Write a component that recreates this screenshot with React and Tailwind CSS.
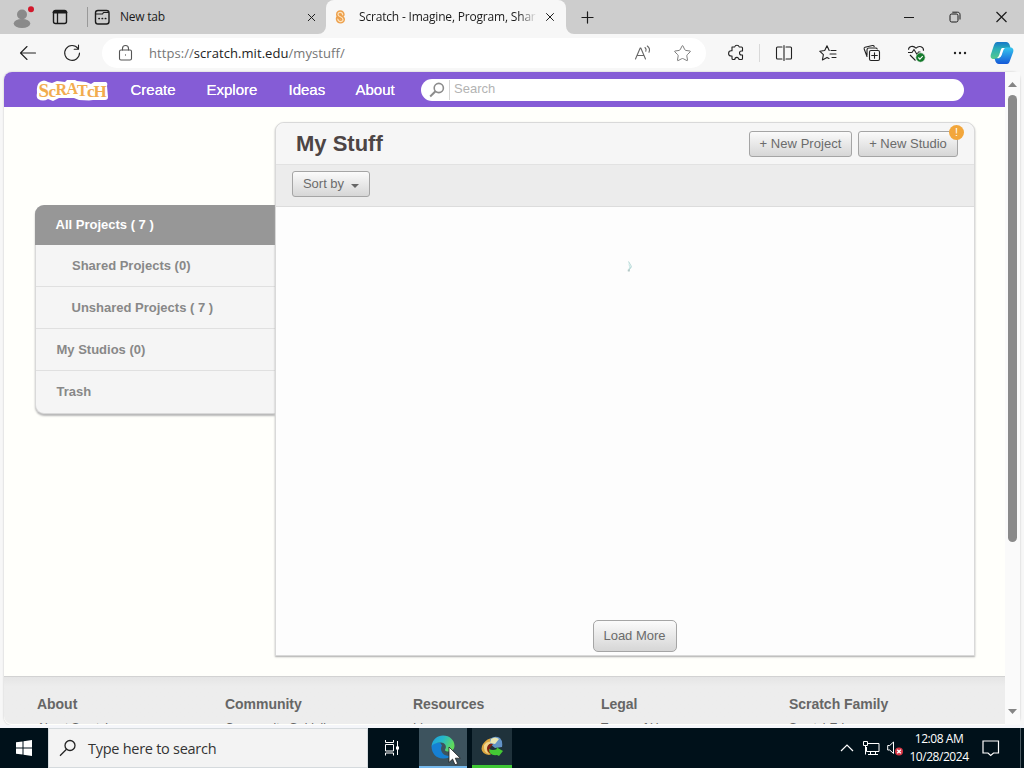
import React from 'react';
import { X, Plus, Star } from 'lucide-react';

const navLinks = [
  { label: 'Create', width: 'w-[76px]' },
  { label: 'Explore', width: 'w-[82px]' },
  { label: 'Ideas', width: 'w-[67px]' },
  { label: 'About', width: 'w-[65px]' },
];

const folders = [
  { label: 'Shared Projects (0)', className: 'h-[42px] pl-[36px]' },
  { label: 'Unshared Projects ( 7 )', className: 'h-[42px] pl-[35.5px]' },
  { label: 'My Studios (0)', className: 'h-[42px] pl-[20.5px]' },
  { label: 'Trash', className: 'h-[41px] pl-[20.5px]' },
];

const footerColumns = [
  { title: 'About', link: 'About Scratch' },
  { title: 'Community', link: 'Community Guidelines' },
  { title: 'Resources', link: 'Ideas' },
  { title: 'Legal', link: 'Terms of Use' },
  { title: 'Scratch Family', link: 'ScratchEd' },
];

function Icon({ size = 18, className = '', children }) {
  return (
    <svg
      width={size}
      height={size}
      viewBox="0 0 18 18"
      fill="none"
      stroke="currentColor"
      strokeWidth="1.1"
      strokeLinecap="round"
      strokeLinejoin="round"
      className={`shrink-0 ${className}`}
    >
      {children}
    </svg>
  );
}

function TabStrip() {
  return (
    <div className="flex h-[34px] items-center bg-[#cdcdcd] text-[#1b1b1b]">
      <svg width="24" height="24" viewBox="0 0 24 24" className="ml-[11px] shrink-0">
        <circle cx="11" cy="9.5" r="5" fill="#8a8a8a" />
        <ellipse cx="11" cy="18.5" rx="8.3" ry="4.6" fill="#8a8a8a" />
        <circle cx="20" cy="4.2" r="3" fill="#d2182b" />
      </svg>
      <Icon className="ml-[16px]" size={18}>
        <rect x="2.5" y="2.5" width="13" height="13" rx="2" strokeWidth="1.4" />
        <path d="M3 4.3h12" strokeWidth="2.6" />
        <path d="M6.5 5v10" strokeWidth="1.3" />
      </Icon>
      <div className="ml-[18px] h-[20px] w-px bg-[#999]" />
      <Icon className="ml-[5px]" size={18}>
        <rect x="2.5" y="2.5" width="13.5" height="13.5" rx="2.5" strokeWidth="1.4" />
        <path d="M3 6h6.5l1-1.5h5" strokeWidth="1.2" />
        <path d="M6 10.500h.3M9.200 10.500h.3M12.400 10.500h.3" strokeWidth="1.7" />
      </Icon>
      <span className="ml-[9px] w-[185px] text-[12px] tracking-[-0.25px]">New tab</span>
      <X size={13} strokeWidth={1.8} />
      <div className="relative ml-[8px] flex h-full w-[240px] items-center rounded-t-[8px] bg-[#f7f7f7]">
        <svg width="8" height="8" className="absolute bottom-0 -left-[8px]">
          <path d="M8 0v8H0a8 8 0 0 0 8-8z" fill="#f7f7f7" />
        </svg>
        <svg width="8" height="8" className="absolute -right-[8px] bottom-0">
          <path d="M0 0v8h8a8 8 0 0 1-8-8z" fill="#f7f7f7" />
        </svg>
        <svg width="11" height="14" viewBox="0 0 11 14" fill="none" className="ml-[9px] shrink-0">
          <path d="M7.7 4.8C7.4 1.6 3 1.5 3 4.4c0 2.8 5 2 5 5 0 3-4.6 2.9-5.2-.2V8" stroke="#eda04c" strokeWidth="4" strokeLinecap="round" />
          <path d="M7.7 4.8C7.4 1.6 3 1.5 3 4.4c0 2.8 5 2 5 5 0 3-4.6 2.9-5.2-.2" stroke="#fde3bd" strokeWidth="1.2" strokeLinecap="round" />
        </svg>
        <span className="ml-[13px] w-[178px] overflow-hidden text-[12px] tracking-[-0.19px] whitespace-nowrap [mask-image:linear-gradient(to_right,black_160px,transparent)]">
          Scratch - Imagine, Program, Shar
        </span>
        <X size={14} strokeWidth={1.7} className="ml-[6px] shrink-0" />
      </div>
      <Plus size={19} strokeWidth={1.5} className="ml-[12px]" />
      <div className="ml-auto flex items-center pr-[16px]">
        <svg width="12" height="12" stroke="currentColor" className="mr-[34px]">
          <path d="M1 6.5h10" />
        </svg>
        <svg width="12" height="12" stroke="currentColor" fill="none" className="mr-[34px]">
          <rect x="1" y="3" width="8" height="8" rx="1.7" />
          <path d="M3.3 1.2h5.2c1.6 0 2.5.9 2.5 2.5v4.8" />
        </svg>
        <svg width="13" height="12" stroke="currentColor" strokeWidth="1.2">
          <path d="M1.5 1l10 10M11.5 1l-10 10" />
        </svg>
      </div>
    </div>
  );
}

function AddressBar() {
  return (
    <div className="flex h-[38px] items-center bg-[#f7f7f7] text-[#222]">
      <Icon className="ml-[19px]">
        <path d="M1.5 9h15M8 2.5L1.5 9l6.5 6.5" />
      </Icon>
      <Icon className="ml-[26px]">
        <path d="M15 4.5A7.4 7.4 0 1 0 16.5 9M15.5 1v4.2h-4.3" />
      </Icon>
      <div className="ml-[21px] flex h-[30px] w-[604px] items-center rounded-full bg-white">
        <Icon className="ml-[15px] text-[#555]">
          <rect x="2.5" y="6" width="12" height="10" rx="1.5" />
          <path d="M5.5 6V4.5a3 3 0 0 1 6 0V6M8.500 10.800v.3" />
        </Icon>
        <span className="mt-px ml-[14px] text-[13px] tracking-[0.06px] text-[#767676]">
          https://<span className="text-[#222]">scratch.mit.edu</span>/mystuff/
        </span>
        <Icon className="ml-auto text-[#666]">
          <path d="M1.5 15L6.2 4h.6L11.5 15M3 11.500h7M11 3.500q1.800 1.500.8 3.800M13.300 2q3.300 2.500 1.700 6.200" />
        </Icon>
        <Star size={19} strokeWidth={1.2} className="mr-[14px] ml-[21px] text-[#777]" />
      </div>
      <Icon className="ml-[22px]">
        <path d="M4 3h2.700a2.300 2.300 0 0 1 4.500 0H13.500q1 0 1 1v3h-1a2 2 0 0 0 0 4h1v3.500q0 1-1 1H11a2.100 2.100 0 0 0-4.200 0H5q-1 0-1-1V12H3.200a2.600 2.600 0 0 1 0-5.200H4z" />
      </Icon>
      <div className="ml-[13px] h-[18px] w-px bg-[#d9d9d9]" />
      <Icon className="ml-[15px]">
        <path d="M7 3H2.500q-1 0-1 1v10q0 1 1 1H7M11 3h4.500q1 0 1 1v10q0 1-1 1H11M9 1.500v15" />
      </Icon>
      <Icon className="ml-[26px]">
        <path d="M10.200 6.500L8 1.800 5.700 6.500l-5 .7 3.700 3.500-1 5.200L8 13.400l2 1.100M12 6.500h5M11 10h6M13 13.500h4" />
      </Icon>
      <Icon className="ml-[26px]">
        <rect x="6.500" y="6.500" width="10" height="10" rx="1.500" />
        <path d="M4 12.500L1.200 5Q.8 3.700 2 3.300L9.500 1.500q1.400-.2 1.700 1M4 11V6q0-2 2-2h6.500q1.500 0 1.700 1M11.500 8.700v5.600M8.700 11.500h5.600" />
      </Icon>
      <svg width="20" height="19" viewBox="0 0 20 19" fill="none" stroke="currentColor" strokeWidth="1.1" className="ml-[26px]">
        <path d="M1.500 5.800C1.500 2.500 6 1 9 4.200 12 1 17 2.500 16.500 6.800M1 8.500h4l2-3 3 5 1.500-2.500h2M3 11l5.500 5.500" />
        <circle cx="13.500" cy="13.500" r="4.700" fill="#157a2c" stroke="#f7f7f7" strokeWidth=".6" />
        <path d="M11.400 13.500l1.500 1.600 2.800-3" stroke="white" />
      </svg>
      <svg width="14" height="4" fill="currentColor" className="ml-[26px]">
        <circle cx="2" cy="2" r="1.2" />
        <circle cx="7" cy="2" r="1.2" />
        <circle cx="12" cy="2" r="1.2" />
      </svg>
      <CopilotIcon />
    </div>
  );
}

function CopilotIcon() {
  return (
    <svg width="24" height="24" viewBox="0 0 24 24" className="ml-[23px] shrink-0">
      <defs>
        <linearGradient id="copilotLeft" x1="0" y1="0" x2="0" y2="1">
          <stop stopColor="#1677c9" />
          <stop offset=".4" stopColor="#2aaeb8" />
          <stop offset="1" stopColor="#55c98b" />
        </linearGradient>
        <linearGradient id="copilotRight" x1="0" y1="0" x2="0" y2="1">
          <stop stopColor="#35c6ee" />
          <stop offset="1" stopColor="#1559d8" />
        </linearGradient>
      </defs>
      <path d="M7 1h9q3 0 4 4l.5 2h-5q-2 0-3 3l-2 6q-1 2-3 2H4c-3 0-4-2-3-5L4 4q1-3 3-3z" fill="url(#copilotLeft)" />
      <path d="M17 23H9q-3 0-4-4l-.3-1.500H8q2 0 3-3l2-6q1-2 3-2h4c3 0 4 2 3 5l-3 8q-1 3.500-3 3.500z" fill="url(#copilotRight)" />
      <path d="M12 7h3q-1.200.5-2 3l-1.300 4q-1 3-3.200 3H7q1.500-.8 2.200-3l1.200-4Q11 7.500 12 7z" fill="white" />
    </svg>
  );
}

function ScratchLogo() {
  return (
    <svg width="74" height="24" viewBox="0 0 74 24" className="ml-[31px] shrink-0">
      <path
        d="M5 4q4-3 8 0l4 1 5-2 8 1 2-2h8l2 1 9 1 5 2 3-2h12q2 1 1 4l1 11q0 3-3 3H58l-4 .5-10-.5-5-2H24l-6 3-5-2q-5 3-10 0-2-2-1-6Q1 7 5 4z"
        fill="white"
      />
      <text fill="#f2ac4e" fontFamily="Liberation Serif, serif" fontWeight="bold" fontSize="19">
        <tspan x="3.500" y="18.500">S</tspan>
        <tspan x="13.500" y="18.500" fontSize="17">c</tspan>
        <tspan x="20.500" y="17" fontSize="16">R</tspan>
        <tspan x="31.500" y="16" fontSize="16">A</tspan>
        <tspan x="42" y="17.500" fontSize="16">T</tspan>
        <tspan x="52" y="18.500" fontSize="17">c</tspan>
        <tspan x="58.500" y="18.500" fontSize="17">H</tspan>
      </text>
    </svg>
  );
}

function SiteNav() {
  return (
    <div className="flex h-[35px] w-[1001px] items-center rounded-tl-[8px] bg-[#855cd6]">
      <ScratchLogo />
      <nav className="ml-[21.5px] flex text-[15px] leading-[20px] text-white [text-shadow:0_0_0.6px_white]">
        {navLinks.map((link) => (
          <a key={link.label} className={link.width}>
            {link.label}
          </a>
        ))}
      </nav>
      <div className="ml-[0.5px] flex h-[22px] w-[543px] items-center rounded-full bg-white">
        <svg width="16" height="16" viewBox="0 0 16 16" fill="none" stroke="#8c8c8c" strokeWidth="1.6" className="ml-[8px]">
          <circle cx="9.800" cy="6" r="4.600" />
          <path d="M6.500 9.300L1.200 14.500" strokeWidth="2" />
        </svg>
        <div className="ml-[4px] h-[20px] w-px bg-[#d5d5d5]" />
        <span className="-mt-[2px] ml-[4px] text-[13px] text-[#b3b3b3]">Search</span>
      </div>
    </div>
  );
}

function Sidebar() {
  return (
    <aside className="mt-[83px] flex h-[209px] w-[240px] flex-col rounded-l-[9px] border border-r-0 border-[#d9d9d9] bg-[#f5f5f5] text-[13px] font-bold text-[#888] shadow-[0_2px_2px_#b8b8b8]">
      <div className="-mt-px -ml-px flex h-[40px] shrink-0 items-center rounded-tl-[9px] bg-[#979797] pl-[20.5px] text-white">
        All Projects ( 7 )
      </div>
      {folders.map((folder) => (
        <div key={folder.label} className={`flex shrink-0 items-center border-b border-[#e0e0e0] last:border-b-0 ${folder.className}`}>
          {folder.label}
        </div>
      ))}
    </aside>
  );
}

function GrayButton({ className, children }) {
  return (
    <button
      className={`relative flex items-center justify-center border border-[#a5a5a5] bg-gradient-to-b from-[#fbfbfb] to-[#d6d6d6] text-[13px] text-[#6b6b6b] ${className}`}
    >
      {children}
    </button>
  );
}

function MyStuff() {
  return (
    <main className="flex h-[534px] w-[700px] flex-col rounded-t-[9px] border border-[#d9d9d9] bg-[#fdfdfd] shadow-[0_1px_2px_#aaa]">
      <div className="flex h-[42px] shrink-0 items-center rounded-t-[9px] border-b border-[#e2e2e2] bg-[#f6f6f6] pl-[20px]">
        <h2 className="text-[22px] font-bold text-[#4d4545]">My Stuff</h2>
        <GrayButton className="mr-[6px] ml-auto h-[26px] w-[103px] rounded-[3px] tracking-[0.05px]">+ New Project</GrayButton>
        <GrayButton className="mr-[16px] h-[26px] w-[100px] rounded-[3px]">
          + New Studio
          <span className="absolute -top-[7px] -right-[7px] flex size-[15px] items-center justify-center rounded-full bg-[#f2a63b] text-[11px] text-white">
            !
          </span>
        </GrayButton>
      </div>
      <div className="flex h-[42px] shrink-0 border-b border-[#dcdcdc] bg-[#ececec] pt-[6px] pl-[16px]">
        <GrayButton className="h-[26px] w-[78px] gap-[7px] rounded-[3px]">
          Sort by
          <svg width="8" height="4" className="mt-[3px]">
            <path d="M0 0h8L4 4z" fill="#666" />
          </svg>
        </GrayButton>
      </div>
      <div className="flex flex-1 flex-col items-center pl-[19px]">
        <svg width="10" height="13" viewBox="0 0 10 13" className="mt-[53px] mr-[9px]">
          <path d="M4 1q-1 4 .5 6L2.500 11l4-3.500L4.500 5z" fill="#c5e5e3" />
          <path d="M3.500 1.500L6.500 6.500 3.500 11" stroke="#b9dad8" fill="none" />
          <path d="M2.800 9.500h2v2h-2z" fill="#b5c8c6" />
        </svg>
        <GrayButton className="mt-auto mb-[3px] h-[32px] w-[84px] rounded-[5px]">Load More</GrayButton>
      </div>
    </main>
  );
}

function Footer() {
  return (
    <footer className="mt-[20px] flex h-[48px] w-[1001px] overflow-hidden rounded-bl-[8px] border-t border-[#d2d2d2] bg-gradient-to-b from-[#e5e5e5] to-[#ededed] to-20% pl-[33px] text-[#666]">
      {footerColumns.map((column) => (
        <div key={column.title} className="w-[188px] shrink-0 pt-[17px] tracking-[-0.03px]">
          <p className="text-[14px] leading-[20px] font-bold">{column.title}</p>
          <p className="mt-[5px] text-[12px] leading-[18px]">{column.link}</p>
        </div>
      ))}
    </footer>
  );
}

function ScrollBar() {
  return (
    <div className="flex w-[15px] flex-col items-center bg-[#fafafa] pt-[10px] pb-[11px]">
      <svg width="9" height="5">
        <path d="M0 5h9L4.5 0z" fill="#858585" />
      </svg>
      <div className="mt-[8px] h-[447px] w-[9px] rounded-full bg-[#8a8a8a]" />
      <svg width="9" height="5" className="mt-auto">
        <path d="M0 0h9L4.5 5z" fill="#858585" />
      </svg>
    </div>
  );
}

function Cursor() {
  return (
    <svg width="13" height="20" viewBox="0 0 13 20" className="absolute top-[18px] left-[29px]">
      <path d="M1 1v15.500l3.600-3.400 2.400 5.700 2.700-1.100-2.400-5.500h5z" fill="white" stroke="#222" strokeWidth=".8" />
    </svg>
  );
}

function EdgeIcon() {
  return (
    <svg width="24" height="24" viewBox="0 0 24 24">
      <defs>
        <linearGradient id="edgeSwirl" x1="0" y1="0" x2="1" y2=".4">
          <stop stopColor="#1c9de0" />
          <stop offset=".5" stopColor="#26b8c9" />
          <stop offset="1" stopColor="#5fda5c" />
        </linearGradient>
      </defs>
      <path d="M.5 11C2 8 5.500 7 9 7.500l2 3c-2.500 4 0 9.500 5.500 10.300q3 .3 5-.8C19 22.500 16 23.700 12 23.500 5 23.500.5 18 .5 11z" fill="#1680d3" />
      <path d="M.5 11.500C1.500 4 6.500.5 12 .5c7 0 11.500 5 11.500 10 0 4-3 6-6 6-3.500 0-4-1.500-3-2.800C16 11 13.500 7.500 10 7.500 5 7.500 1.500 9.500.5 11.500z" fill="url(#edgeSwirl)" />
    </svg>
  );
}

function IdmIcon() {
  return (
    <svg width="24" height="22" viewBox="0 0 24 22">
      <path d="M3 8Q7 2 13 2l-1 5q-4 0-4 5 1 4 6 5l-5 2Q2 18 1.500 13q0-3 1.500-5z" fill="#dba63f" />
      <path d="M10 3q5-4 10-1 3 3 2 9l-7 1-5-4z" fill="#6393c7" />
      <path d="M11 3q4-3 8 0l-4 5-5-1z" fill="#e9e6b4" />
      <path d="M4 9q3-4 7-3l-4 6q-1 3 2 6-6-2-5-9z" fill="#f0d389" />
      <path d="M7 12q1-5 6-4l-3 4q0 3 3 4l-2 2q-4-2-4-6z" fill="#7d2014" />
      <path d="M9 13q4 2 8 0l-1-2 7 4-4 5-2-1q-8 1-8-6z" fill="#43c934" />
    </svg>
  );
}

function Taskbar() {
  return (
    <div className="flex h-[40px] items-center bg-[#00111a] text-white">
      <div className="flex w-[48px] justify-center">
        <svg width="16" height="16" fill="white">
          <path d="M0 2.300l6.500-.9v6.100H0zM7.500 1.200L16 0v7.500H7.500zM0 8.500h6.500v6.100L0 13.700zM7.500 8.500H16V16l-8.500-1.200z" />
        </svg>
      </div>
      <div className="flex h-full w-[320px] items-center border border-[#d5dadd] bg-[#f3f3f3] text-[#333]">
        <svg width="18" height="18" fill="none" stroke="#222" strokeWidth="1.3" className="ml-[10px]">
          <circle cx="11" cy="6.500" r="5" />
          <path d="M7.500 10.200L1 16.700" />
        </svg>
        <span className="mt-[2px] ml-[11px] text-[14.5px] tracking-[-0.27px]">Type here to search</span>
      </div>
      <svg width="17" height="16" fill="none" stroke="white" className="ml-[16px]">
        <path d="M1.500 0v2.500h8V0M1.500 15.500V13h8v2.500M1.500 4.500h8v6.500h-8zM13.500 1v14" />
        <path d="M12 6.500h3v3h-3z" fill="white" stroke="none" />
      </svg>
      <div className="relative ml-[18px] flex h-full w-[48px] items-center justify-center border-b-2 border-[#76b9ed] bg-[#3d535e]">
        <EdgeIcon />
        <Cursor />
      </div>
      <div className="ml-[5px] flex h-full w-[40px] items-center justify-center border-b-[3px] border-[#3fc735] bg-[#1f323b]">
        <IdmIcon />
      </div>
      <svg width="14" height="8" fill="none" stroke="white" strokeWidth="1.2" className="ml-auto">
        <path d="M1 7l6-6 6 6" />
      </svg>
      <svg width="17" height="15" fill="none" stroke="white" className="ml-[9px]">
        <path d="M5 2.500h11v8H3.500V6M.5.500h4v4h-4zM2.500 4.500v9M7.500 10.500v3M12.500 10.500v3M5 13.500h10" />
      </svg>
      <svg width="17" height="16" fill="none" stroke="white" className="ml-[7px]">
        <path d="M.7 5.500h2L6.500 2v11.500L2.700 10h-2z" />
        <circle cx="12" cy="11.500" r="4" fill="#d73645" stroke="none" />
        <path d="M10.200 9.700l3.600 3.600M13.800 9.700l-3.600 3.600" strokeWidth="1.3" />
      </svg>
      <div className="ml-[3px] w-[64px] text-center text-[12px] leading-[18px] tracking-[-0.45px] whitespace-nowrap">
        <p>12:08 AM</p>
        <p>10/28/2024</p>
      </div>
      <svg width="18" height="17" fill="none" stroke="white" strokeWidth="1.2" className="mr-[20px] ml-[11px]">
        <path d="M1 1h15.500v12h-5L8.700 15.500 6 13H1z" />
      </svg>
      <div className="mr-[3px] h-full w-px bg-[#4b5a62]" />
    </div>
  );
}

function App() {
  return (
    <div className="flex h-[768px] w-[1024px] flex-col overflow-hidden bg-[#f7f7f7] font-['Open_Sans','Noto_Sans',sans-serif]">
      <TabStrip />
      <AddressBar />
      <div className="mr-[4px] ml-[4px] flex h-[653px] rounded-lg font-['Liberation_Sans',Arial,sans-serif] shadow-[0_0_2px_#bbb]">
        <div className="w-[1001px] rounded-l-lg bg-[#fffffb]">
          <SiteNav />
          <div className="mt-[15px] flex pl-[31px]">
            <Sidebar />
            <MyStuff />
          </div>
          <Footer />
        </div>
        <ScrollBar />
      </div>
      <div className="h-[3px] shrink-0 bg-[#f5f6fa]" />
      <Taskbar />
    </div>
  );
}

export default App;
